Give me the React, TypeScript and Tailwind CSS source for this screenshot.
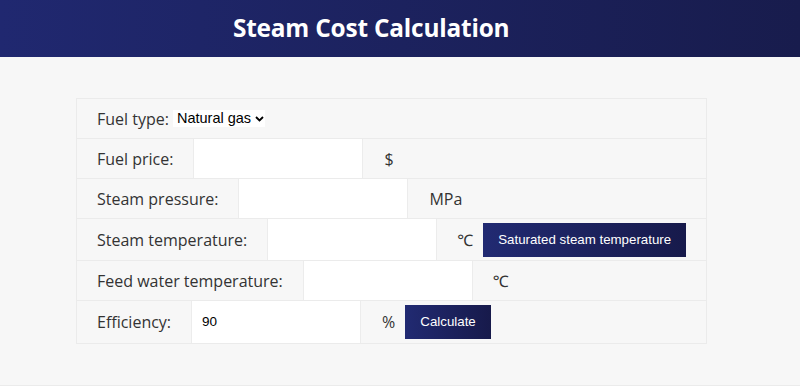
import React from "react";

const label = "px-5 text-[16px] text-[#333] whitespace-nowrap";
const unit = "text-[16px] text-[#333]";
const inputCls =
  "w-[170px] self-stretch bg-white border-x border-[#ececec] px-[10px] text-[13.5px] text-black outline-none font-['Liberation_Sans',Arial,sans-serif]";
const btn =
  "h-[34px] px-[15px] text-[13.3px] text-white bg-gradient-to-r from-[#212a72] to-[#171a4b] font-['Liberation_Sans',Arial,sans-serif]";

function Row({ children, h = "h-10" }: { children: React.ReactNode; h?: string }) {
  return (
    <div className={`flex items-center ${h} border-b border-[#ebebeb] last:border-b-0`}>
      {children}
    </div>
  );
}

export default function App() {
  return (
    <div className="h-[386px] bg-[#f7f7f7] font-['Open_Sans','Noto_Sans',sans-serif] border-b border-[#ebebeb]">
      <header className="h-[57px] bg-gradient-to-r from-[#202870] to-[#181c4d] flex items-center pl-[233px]">
        <h1 className="text-[24.4px] font-bold text-white tracking-[-0.2px]">Steam Cost Calculation</h1>
      </header>
      <div className="mt-[41px] ml-[76px] w-[631px] border border-[#ebebeb]">
        <Row>
          <span className="pl-5 pr-[4px] text-[16px] text-[#333]">Fuel type:</span>
          <div className="flex items-center h-[17px] w-[92px] bg-white pl-[4px] text-[14.5px] text-black font-['Liberation_Sans',Arial,sans-serif]">
            Natural gas
            <svg width="9" height="6" viewBox="0 0 9 6" className="ml-[4px]">
              <path d="M1 1l3.5 3.5L8 1" stroke="#000" strokeWidth="1.8" fill="none" />
            </svg>
          </div>
        </Row>
        <Row>
          <span className={label}>Fuel price:</span>
          <input className={inputCls} />
          <span className={`pl-[21px] ${unit}`}>$</span>
        </Row>
        <Row>
          <span className={label}>Steam pressure:</span>
          <input className={inputCls} />
          <span className={`pl-[21px] ${unit}`}>MPa</span>
        </Row>
        <Row h="h-[42px]">
          <span className={label}>Steam temperature:</span>
          <input className={inputCls} />
          <span className={`pl-[20px] ${unit}`}>℃</span>
          <button className={`${btn} ml-[10px]`}>Saturated steam temperature</button>
        </Row>
        <Row>
          <span className={label}>Feed water temperature:</span>
          <input className={inputCls} />
          <span className={`pl-[20px] ${unit}`}>℃</span>
        </Row>
        <Row h="h-[42px]">
          <span className={label}>Efficiency:</span>
          <input className={inputCls} defaultValue="90" />
          <span className={`pl-[21px] ${unit}`}>%</span>
          <button className={`${btn} ml-[10px]`}>Calculate</button>
        </Row>
      </div>
    </div>
  );
}
